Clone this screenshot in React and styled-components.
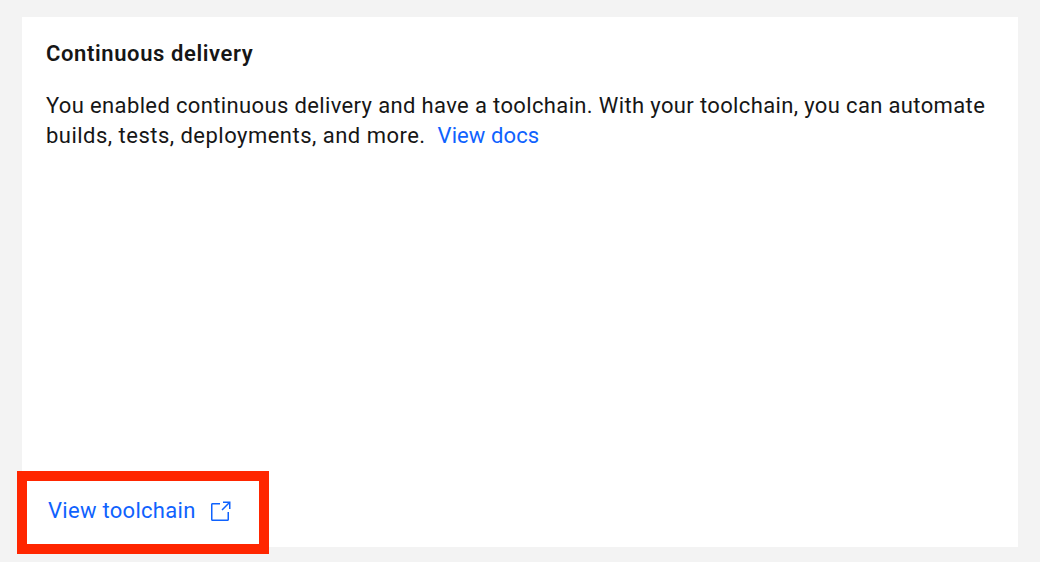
import React from "react";
import styled, { createGlobalStyle } from "styled-components";

const GlobalStyle = createGlobalStyle`
  *, *::before, *::after { box-sizing: border-box; }
  body {
    margin: 0;
    background: #f3f3f3;
    color: #161616;
    font-family: Roboto, "Liberation Sans", sans-serif;
    font-size: 22px;
    line-height: 30px;
  }
`;

const Page = styled.main`
  display: flex;
  height: 562px;
  padding: 17px 22px 15px;
`;

const Card = styled.section`
  display: flex;
  flex: 1;
  min-width: 0;
  flex-direction: column;
  align-items: flex-start;
  padding: 22px 24px 0;
  background: #fff;
`;

const Title = styled.h2`
  margin: 0 0 22px;
  font-size: 22px;
  font-weight: 600;
  line-height: 30px;
  letter-spacing: 0.61px;
`;

const Line = styled.span`
  display: block;
  white-space: nowrap;
  letter-spacing: ${({ $tracking }) => $tracking};
`;

const Description = styled.p`
  margin: 0;
`;

const Link = styled.a`
  color: #0f62fe;
  text-decoration: none;
  letter-spacing: ${({ $tracking }) => $tracking};
  margin-left: ${({ $gap }) => $gap || 0};
`;

const Highlight = styled.div`
  display: flex;
  align-items: center;
  width: 252px;
  height: 83px;
  margin: auto 0 -7px -29px;
  padding: 0 0 4px 21px;
  border: 10px solid #ff2600;
  background: #fff;
`;

const ActionLink = styled(Link)`
  display: flex;
  align-items: center;
  justify-content: space-between;
  width: 184px;
`;

const LaunchIcon = styled.svg`
  flex: none;
  width: 24px;
  height: 24px;
  margin-top: 2px;
  fill: currentColor;
`;

export default function App() {
  return (
    <>
      <GlobalStyle />
      <Page>
        <Card>
          <Title>Continuous delivery</Title>
          <Description>
            <Line $tracking="0.36px">
              You enabled continuous delivery and have a toolchain. With your toolchain, you can automate
            </Line>
            <Line $tracking="0.48px">
              builds, tests, deployments, and more.{" "}
              <Link href="#" $tracking="0.1px" $gap="6px">View docs</Link>
            </Line>
          </Description>
          <Highlight>
            <ActionLink href="#" $tracking="0.29px">
              View toolchain
              <LaunchIcon viewBox="0 0 16 16" aria-hidden="true">
                <path d="M13 14H3c-.6 0-1-.4-1-1V3c0-.6.4-1 1-1h5v1H3v10h10V8h1v5c0 .6-.4 1-1 1z" />
                <path d="M10 1v1h3.3L9 6.3l.7.7L14 2.7V6h1V1z" />
              </LaunchIcon>
            </ActionLink>
          </Highlight>
        </Card>
      </Page>
    </>
  );
}
